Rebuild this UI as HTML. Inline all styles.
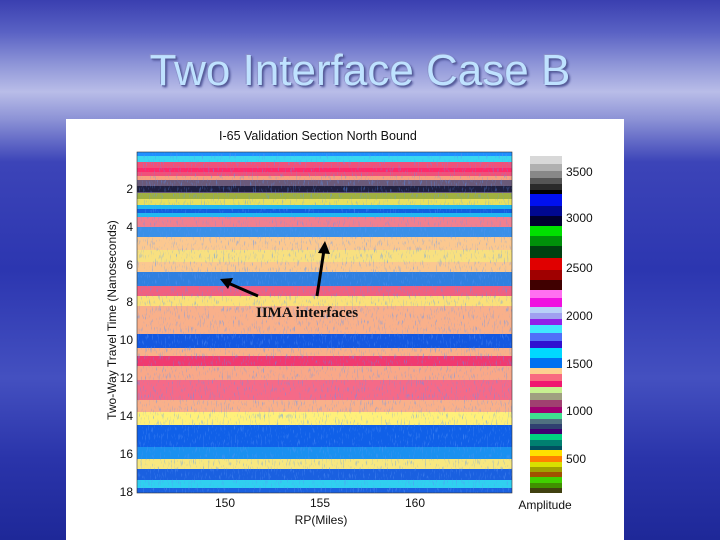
<!DOCTYPE html>
<html><head><style>
html,body{margin:0;padding:0}
body{width:720px;height:540px;overflow:hidden;position:relative;font-family:"Liberation Sans",sans-serif;
background:linear-gradient(180deg,#3a3fb0 0%,#5a62c4 6%,#8f96d8 12%,#b9bde8 17%,#8d93d6 22%,#3c44b8 30%,#2c36b0 50%,#4450c0 70%,#2a34aa 85%,#1e2898 100%);}
.title{position:absolute;left:0;width:720px;top:46px;text-align:center;font-size:44px;color:#bfe2ff;
text-shadow:1px 1px 0 #5a609a,-1px -1px 0 #8a90c8,2px 2px 2px #50569a;}
.panel{position:absolute;left:66px;top:119px;width:558px;height:421px;background:#fff}
.t{position:absolute;font-size:12.5px;color:#111}
</style></head><body>
<div class="title">Two Interface Case B</div>
<div class="panel"></div>
<div class="t" style="left:219px;top:129px">I-65 Validation Section North Bound</div>
<svg style="position:absolute;left:0;top:0" width="720" height="540">
<defs>
<filter id="n" filterUnits="userSpaceOnUse" x="137" y="152" width="375" height="341"><feTurbulence type="fractalNoise" baseFrequency="0.9 0.15" numOctaves="2" seed="3"/><feColorMatrix values="0 0 0 0 0.1 0 0 0 0 0.3 0 0 0 0 0.95 0 0 0 6 -3.6"/></filter>
<clipPath id="c"><rect x="137" y="152" width="375" height="341"/></clipPath>
</defs>
<g>
<rect x="137" y="152" width="375" height="341" fill="#f9b08a"/>
<rect x="137" y="152" width="375" height="4" fill="#1e90ff"/>
<rect x="137" y="156" width="375" height="6" fill="#3ad8f0"/>
<rect x="137" y="162" width="375" height="14" fill="#f0507a"/>
<rect x="137" y="168" width="375" height="4" fill="#ff2a6a"/>
<rect x="137" y="176" width="375" height="4" fill="#f9a080"/>
<rect x="137" y="180" width="375" height="18" fill="#6a5a7a"/>
<rect x="137" y="186" width="375" height="6" fill="#202040"/>
<rect x="137" y="193" width="375" height="6" fill="#a0b040"/>
<rect x="137" y="199" width="375" height="6" fill="#e8e060"/>
<rect x="137" y="205" width="375" height="12" fill="#20b8f0"/>
<rect x="137" y="209" width="375" height="4" fill="#1060e0"/>
<rect x="137" y="217" width="375" height="10" fill="#f08090"/>
<rect x="137" y="227" width="375" height="10" fill="#3a90e8"/>
<rect x="137" y="237" width="375" height="35" fill="#fbc890"/>
<rect x="137" y="250" width="375" height="12" fill="#f8e080"/>
<rect x="137" y="272" width="375" height="14" fill="#3080e0"/>
<rect x="137" y="286" width="375" height="10" fill="#f06080"/>
<rect x="137" y="296" width="375" height="10" fill="#fbe07a"/>
<rect x="137" y="306" width="375" height="28" fill="#f9b08a"/>
<rect x="137" y="334" width="375" height="14" fill="#1458e0"/>
<rect x="137" y="348" width="375" height="8" fill="#f9b08a"/>
<rect x="137" y="356" width="375" height="10" fill="#f03a70"/>
<rect x="137" y="366" width="375" height="14" fill="#f9a888"/>
<rect x="137" y="380" width="375" height="20" fill="#f56a88"/>
<rect x="137" y="400" width="375" height="12" fill="#f9b08a"/>
<rect x="137" y="412" width="375" height="13" fill="#fff07a"/>
<rect x="137" y="425" width="375" height="22" fill="#1060e8"/>
<rect x="137" y="447" width="375" height="12" fill="#1a90f0"/>
<rect x="137" y="459" width="375" height="10" fill="#f8e880"/>
<rect x="137" y="469" width="375" height="11" fill="#1a60e0"/>
<rect x="137" y="480" width="375" height="8" fill="#30d0f0"/>
<rect x="137" y="488" width="375" height="5" fill="#1a60e0"/>
<g clip-path="url(#c)"><rect x="137" y="160" width="375" height="330" filter="url(#n)" opacity="0.5"/></g>
<rect x="137" y="152" width="375" height="341" fill="none" stroke="#333" stroke-width="0.6"/>
</g>
<g font-size="12" fill="#111" text-anchor="end" font-family="Liberation Sans">
<text x="133" y="193">2</text><text x="133" y="231">4</text><text x="133" y="269">6</text><text x="133" y="306">8</text>
<text x="133" y="344">10</text><text x="133" y="382">12</text><text x="133" y="420">14</text><text x="133" y="458">16</text><text x="133" y="496">18</text>
</g>
<g font-size="12" fill="#111" text-anchor="middle" font-family="Liberation Sans">
<text x="225" y="507">150</text><text x="320" y="507">155</text><text x="415" y="507">160</text>
<text x="321" y="524">RP(Miles)</text><text x="545" y="509">Amplitude</text>
</g>
<text transform="translate(116,320) rotate(-90)" text-anchor="middle" font-size="12" fill="#111" font-family="Liberation Sans">Two-Way Travel Time (Nanoseconds)</text>
<g>
<rect x="530" y="156" width="32" height="8" fill="#d8d8d8"/><rect x="530" y="164" width="32" height="7" fill="#b0b0b0"/>
<rect x="530" y="171" width="32" height="7" fill="#888"/><rect x="530" y="178" width="32" height="6" fill="#555"/>
<rect x="530" y="184" width="32" height="6" fill="#2a2a2a"/><rect x="530" y="190" width="32" height="4" fill="#000"/>
<rect x="530" y="194" width="32" height="12" fill="#0010f0"/><rect x="530" y="206" width="32" height="10" fill="#000890"/>
<rect x="530" y="216" width="32" height="10" fill="#000030"/>
<rect x="530" y="226" width="32" height="10" fill="#00e000"/><rect x="530" y="236" width="32" height="10" fill="#00900a"/>
<rect x="530" y="246" width="32" height="12" fill="#004010"/>
<rect x="530" y="258" width="32" height="12" fill="#e00000"/><rect x="530" y="270" width="32" height="10" fill="#a00000"/>
<rect x="530" y="280" width="32" height="10" fill="#400000"/>
<rect x="530" y="290" width="32" height="8" fill="#ff70f0"/><rect x="530" y="298" width="32" height="9" fill="#f010e0"/>
<rect x="530" y="307" width="32" height="6" fill="#b8d0f8"/><rect x="530" y="313" width="32" height="6" fill="#a0a0f0"/>
<rect x="530" y="319" width="32" height="6" fill="#9020e8"/>
<rect x="530" y="325" width="32" height="8" fill="#40e8ff"/><rect x="530" y="333" width="32" height="8" fill="#5070f8"/>
<rect x="530" y="341" width="32" height="7" fill="#3010d0"/>
<rect x="530" y="348" width="32" height="10" fill="#00d8ff"/><rect x="530" y="358" width="32" height="10" fill="#0070f0"/>
<rect x="530" y="368" width="32" height="6" fill="#fcd090"/><rect x="530" y="374" width="32" height="7" fill="#f86a80"/>
<rect x="530" y="381" width="32" height="6" fill="#f01870"/>
<rect x="530" y="387" width="32" height="6" fill="#c8f090"/><rect x="530" y="393" width="32" height="7" fill="#a0a080"/>
<rect x="530" y="400" width="32" height="7" fill="#a04070"/>
<rect x="530" y="407" width="32" height="6" fill="#a00070"/><rect x="530" y="413" width="32" height="6" fill="#40e090"/>
<rect x="530" y="419" width="32" height="5" fill="#507080"/><rect x="530" y="424" width="32" height="5" fill="#304070"/>
<rect x="530" y="429" width="32" height="5" fill="#400070"/>
<rect x="530" y="434" width="32" height="6" fill="#00d080"/><rect x="530" y="440" width="32" height="6" fill="#008070"/>
<rect x="530" y="446" width="32" height="4" fill="#005060"/>
<rect x="530" y="450" width="32" height="6" fill="#ffe000"/><rect x="530" y="456" width="32" height="6" fill="#ff8000"/>
<rect x="530" y="462" width="32" height="5" fill="#d8e000"/><rect x="530" y="467" width="32" height="5" fill="#a0a000"/>
<rect x="530" y="472" width="32" height="5" fill="#a05000"/>
<rect x="530" y="477" width="32" height="6" fill="#40d000"/><rect x="530" y="483" width="32" height="5" fill="#409000"/>
<rect x="530" y="488" width="32" height="5" fill="#404010"/>
</g>
<g font-size="12" fill="#111" font-family="Liberation Sans">
<text x="566" y="176">3500</text><text x="566" y="222">3000</text><text x="566" y="272">2500</text><text x="566" y="320">2000</text>
<text x="566" y="368">1500</text><text x="566" y="415">1000</text><text x="566" y="463">500</text>
</g>
<g stroke="#000" stroke-width="3" fill="#000">
<line x1="258" y1="296" x2="228" y2="283"/><polygon points="220,279 233,278 228,289" stroke="none"/>
<line x1="317" y1="296" x2="324" y2="250"/><polygon points="325,241 330,254 318,253" stroke="none"/>
</g>
<text x="256" y="317" font-family="Liberation Serif" font-weight="bold" font-size="15" fill="#111">IIMA interfaces</text>
</svg>
</body></html>
